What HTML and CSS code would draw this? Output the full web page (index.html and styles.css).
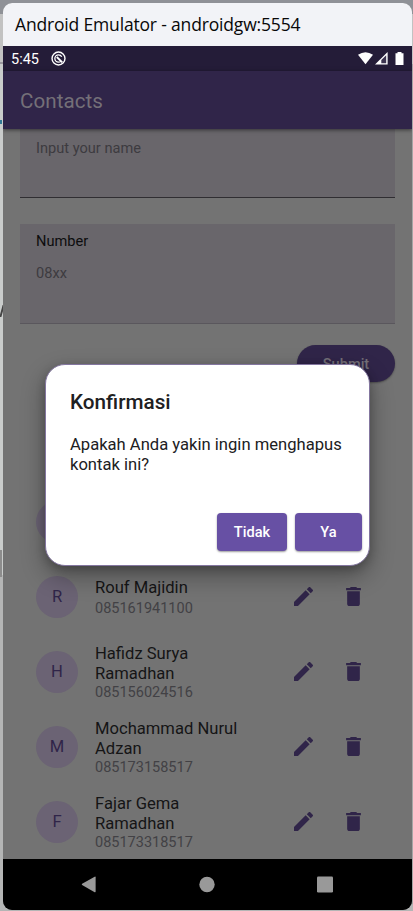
FILE: index.html
```html
<!DOCTYPE html>
<html lang="id">
<head>
<meta charset="utf-8">
<title>Contacts</title>
<link rel="stylesheet" href="styles.css">
</head>
<body>
<svg class="defs" width="0" height="0">
  <symbol id="pencil" viewBox="3 3 18 18"><path d="M3 17.25V21h3.75L17.81 9.94l-3.75-3.75L3 17.25zM20.71 7.04a1 1 0 0 0 0-1.41l-2.34-2.34a1 1 0 0 0-1.41 0l-1.83 1.83 3.75 3.75 1.83-1.83z"/></symbol>
  <symbol id="trash" viewBox="5 3 14 18"><path d="M6 19c0 1.1.9 2 2 2h8c1.1 0 2-.9 2-2V7H6v12zM19 4h-3.5l-1-1h-5l-1 1H5v2h14V4z"/></symbol>
</svg>
<div class="desktop">
  <i class="mark side"></i><i class="mark line-left"></i><i class="mark line-right"></i><i class="mark slash"></i><i class="mark dot"></i><i class="mark edge"></i>
  <div class="window">
    <header class="titlebar">Android Emulator - androidgw:5554</header>
    <div class="status">
      <span class="clock">5:45</span>
      <svg class="debug" viewBox="0 0 16 16"><circle cx="8" cy="8" r="6.9" fill="none" stroke="#fff" stroke-width="1.5"/><circle cx="8" cy="8" r="3.9" fill="none" stroke="#fff" stroke-width="1.4" stroke-dasharray="19 5.5" stroke-dashoffset="-3"/><path d="M6.2 6.4l5.8 5.8" stroke="#fff" stroke-width="2"/></svg>
      <svg class="signals" viewBox="0 0 46 13"><path d="M0 2.8Q7.5-2.4 15 2.8L7.5 12.3Z" fill="#fff"/><path d="M17 12.6L29.6 0v12.6Z" fill="#fff"/><path d="M23.3 8L28.2 3.3v8h-4.9Z" fill="#3d3551"/><path d="M37.5 1.3h2V0h4v1.3h2V13h-8Z" fill="#fff"/></svg>
    </div>
    <div class="appbar">Contacts</div>
    <main class="content">
      <div class="field name"><span class="hint">Input your name</span></div>
      <div class="field number"><label>Number</label><span class="hint">08xx</span></div>
      <div class="submit">Submit</div>
      <div class="contacts">
        <div class="contact"><div class="avatar"></div></div>
        <div class="contact single"><div class="avatar">R</div><div class="info"><b>Rouf Majidin</b><span>085161941100</span></div><svg class="pencil"><use href="#pencil"/></svg><svg class="trash"><use href="#trash"/></svg></div>
        <div class="contact"><div class="avatar">H</div><div class="info"><b>Hafidz Surya<br>Ramadhan</b><span>085156024516</span></div><svg class="pencil"><use href="#pencil"/></svg><svg class="trash"><use href="#trash"/></svg></div>
        <div class="contact"><div class="avatar">M</div><div class="info"><b>Mochammad Nurul<br>Adzan</b><span>085173158517</span></div><svg class="pencil"><use href="#pencil"/></svg><svg class="trash"><use href="#trash"/></svg></div>
        <div class="contact"><div class="avatar">F</div><div class="info"><b>Fajar Gema<br>Ramadhan</b><span>085173318517</span></div><svg class="pencil"><use href="#pencil"/></svg><svg class="trash"><use href="#trash"/></svg></div>
      </div>
    </main>
    <nav class="nav">
      <svg viewBox="0 0 16 18"><path d="M.7 8.2L14 .7q1-.4 1 .6v15.2q0 1-1 .6L.7 9.4q-.8-.6 0-1.2Z"/></svg>
      <svg viewBox="0 0 16 16"><circle cx="8" cy="8" r="7.7"/></svg>
      <svg viewBox="0 0 16 16"><rect width="16" height="16" rx="1.3"/></svg>
    </nav>
    <div class="dialog" role="dialog">
      <h2>Konfirmasi</h2>
      <p>Apakah Anda yakin ingin menghapus<br>kontak ini?</p>
      <div class="actions"><button class="no">Tidak</button><button class="yes">Ya</button></div>
    </div>
  </div>
</div>
</body>
</html>
```
FILE: styles.css
```css
* { box-sizing: border-box; }
body { margin: 0; font-family: Roboto, sans-serif; }
.defs { position: absolute; }
.desktop { position: relative; width: 413px; height: 911px; padding: 3px 1px 1px 3px; overflow: hidden; background: linear-gradient(#8f9197 0 14px, #c2c2c2 14px 64px, #c9cccb 64px 575px, #b4b5b5 575px); }
.mark { position: absolute; }
.side { left: 0; top: 550px; width: 2px; height: 27px; background: #8c8c8c; }
.line-left { left: 0; top: 62px; width: 3px; height: 2px; background: #99979d; }
.line-right { right: 0; top: 112px; width: 1px; height: 2px; background: #555; }
.slash { left: 1px; top: 305px; width: 2px; height: 12px; background: #444; transform: skewX(-15deg); }
.dot { left: 0; top: 120px; width: 2px; height: 4px; background: #327995; }
.edge { right: 0; top: 64px; width: 1px; height: 840px; background: #a5a5a5; }
.window { position: relative; width: 409px; height: 907px; display: flex; flex-direction: column; overflow: hidden; border-radius: 9px; background: #737373; }
.titlebar { height: 43px; flex: none; padding-left: 12px; background: #f2f3f7; color: #080808; font: 17.5px/42px "Open Sans", sans-serif; white-space: nowrap; letter-spacing: -.17px; }
.status { height: 25px; flex: none; display: flex; align-items: center; padding: 0 8px 0 8px; background: #241c38; color: #fff; }
.clock { width: 40px; font-size: 14.5px; line-height: 25px; padding-top: 1px; }
.debug { width: 15px; height: 15px; }
.signals { width: 46px; height: 13px; margin-left: auto; }
.appbar { z-index: 1; height: 58px; flex: none; padding-left: 17px; background: #302549; color: #747078; font-size: 20.6px; line-height: 60px; letter-spacing: .05px; box-shadow: 0 1px 4px #0008; }
.content { height: 730px; flex: none; padding: 0 17px; overflow: hidden; }
.field { background: #69666b; padding-left: 16px; font-size: 14.6px; color: #3d3b40; }
.name { height: 69px; border-bottom: 1px solid #302e32; padding-top: 10px; line-height: 19px; }
.number { height: 100px; margin-top: 26px; border-bottom: 1px solid #5a575d; padding-top: 8px; display: flex; flex-direction: column; }
.number label { color: #0d0d0e; line-height: 19px; }
.number .hint { margin-top: 13px; line-height: 19px; }
.submit { width: 98px; height: 37px; margin: 21px 0 0 auto; border-radius: 19px; background: #302549; color: #747078; font-size: 14.6px; font-weight: 500; line-height: 39px; text-align: center; box-shadow: 0 1px 2px #0005; }
.contacts { margin-top: 102px; }
.contact { height: 75px; display: flex; align-items: center; padding: 0 33px 0 16px; }
.avatar { width: 42px; height: 42px; margin-right: 17px; border-radius: 50%; background: #6b6374; color: #302549; font-size: 16.6px; line-height: 42px; text-align: center; }
.info { width: 199px; display: flex; flex-direction: column; padding-top: 2px; }
.info b { color: #151516; font-size: 16.6px; font-weight: 400; line-height: 20px; }
.info span { color: #424145; font-size: 14.5px; line-height: 18px; }
.single .info b { padding-bottom: 2px; }
.contact svg { fill: #302549; flex: none; }
.pencil { width: 19px; height: 19px; margin-right: 33px; }
.trash { width: 15px; height: 19px; }
.nav { height: 51px; flex: none; display: flex; justify-content: center; gap: 102px; align-items: center; padding-right: 2px; background: #000; }
.nav svg { width: 16px; height: 17px; fill: #999; }
.dialog { position: absolute; z-index: 2; left: 42px; top: 361px; width: 325px; height: 202px; border: 1px solid #83769f; border-radius: 20px; background: #fff; color: #202022; padding: 25px 7px 0 24px; box-shadow: 0 10px 24px #0005, 0 3px 10px #0003; }
.dialog h2 { margin: 0; font-size: 20.7px; font-weight: 500; line-height: 25px; }
.dialog p { margin: 20px 0 0; font-size: 16.6px; line-height: 20px; white-space: nowrap; }
.actions { display: flex; justify-content: flex-end; gap: 8px; margin-top: 38px; }
.actions button { height: 38px; padding: 1px 0 0; border: 0; border-radius: 4px; background: #6750a4; color: #fff; font: 500 14.6px/37px Roboto, sans-serif; box-shadow: 0 1px 2px #0006; }
.no { width: 70px; }
.yes { width: 67px; }
```
